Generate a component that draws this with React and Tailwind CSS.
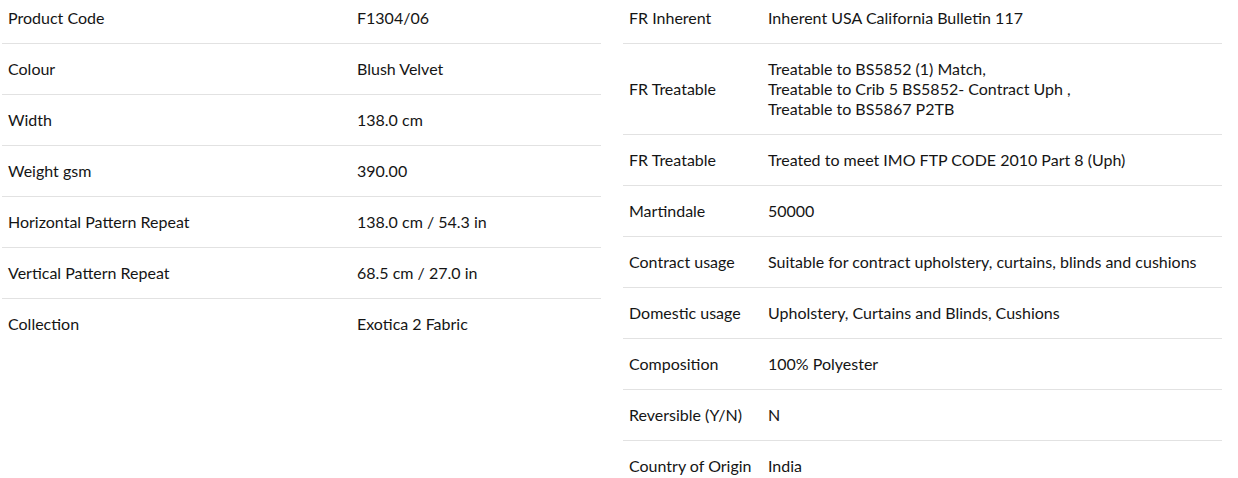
const leftRows = [
    ["Product Code", "F1304/06"],
    ["Colour", "Blush Velvet"],
    ["Width", "138.0 cm"],
    ["Weight gsm", "390.00"],
    ["Horizontal Pattern Repeat", "138.0 cm / 54.3 in"],
    ["Vertical Pattern Repeat", "68.5 cm / 27.0 in"],
    ["Collection", "Exotica 2 Fabric"],
];

const rightRows = [
    ["FR Inherent", ["Inherent USA California Bulletin 117"]],
    ["FR Treatable", ["Treatable to BS5852 (1) Match,", "Treatable to Crib 5 BS5852- Contract Uph ,", "Treatable to BS5867 P2TB"]],
    ["FR Treatable", ["Treated to meet IMO FTP CODE 2010 Part 8 (Uph)"]],
    ["Martindale", ["50000"]],
    ["Contract usage", ["Suitable for contract upholstery, curtains, blinds and cushions"]],
    ["Domestic usage", ["Upholstery, Curtains and Blinds, Cushions"]],
    ["Composition", ["100% Polyester"]],
    ["Reversible (Y/N)", ["N"]],
    ["Country of Origin", ["India"]],
];

export default function App() {
    return (
        <div className="w-[1238px] h-[478px] overflow-hidden bg-white">
            <div className="flex items-start gap-[22px] pl-[2px] -mt-[7px] text-[16px] leading-5 text-[#151515] font-['Lato',sans-serif]">
                <table className="w-[599px] border-collapse">
                    <tbody>
                        {leftRows.map(([label, value], i) => (
                            <tr key={i} className="border-b border-[#e2e2e2] last:border-b-0">
                                <td className="w-[349px] px-[6px] py-[15px]">{label}</td>
                                <td className="px-[6px] py-[15px]">{value}</td>
                            </tr>
                        ))}
                    </tbody>
                </table>
                <table className="w-[599px] border-collapse">
                    <tbody>
                        {rightRows.map(([label, lines], i) => (
                            <tr key={i} className="border-b border-[#e2e2e2] last:border-b-0">
                                <td className="w-[139px] px-[6px] py-[15px] whitespace-nowrap">{label}</td>
                                <td className="px-[6px] py-[15px]">
                                    {lines.map((line, j) => <div key={j}>{line}</div>)}
                                </td>
                            </tr>
                        ))}
                    </tbody>
                </table>
            </div>
        </div>
    );
}
